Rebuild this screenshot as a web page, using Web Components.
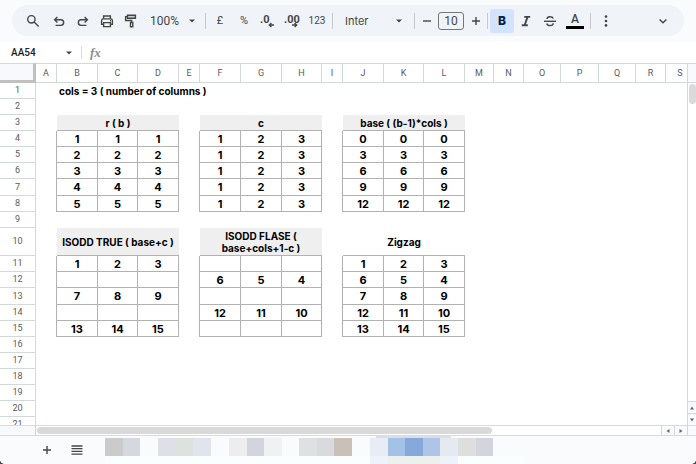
<!DOCTYPE html>
<html lang="en">
<head>
<meta charset="utf-8">
<title>Zigzag sheet</title>
<style>
  html, body { margin: 0; height: 100%; background: #4a4a4a; }
  body { font-family: Roboto, "Liberation Sans", sans-serif; color: #444746; overflow: hidden; }
</style>
</head>
<body>
<sheet-app>
  <tool-bar slot="tools"></tool-bar>
  <name-bar slot="name" cell="AA54"></name-bar>
  <scroll-frame slot="grid"><sheet-grid></sheet-grid></scroll-frame>
  <tab-strip slot="tabs"></tab-strip>
</sheet-app>

<script>
const define = (name, html, setup) => {
  const template = document.createElement('template');
  template.innerHTML = html;
  customElements.define(name, class extends HTMLElement {
    constructor() {
      super();
      this.attachShadow({ mode: 'open' }).append(template.content.cloneNode(true));
    }
    connectedCallback() { if (setup) setup(this, this.shadowRoot); }
  });
};

const ICONS = {
  search: '<circle cx="6.4" cy="6.3" r="3.7"/><path d="M9.2 9.1l4.4 4.4"/>',
  undo: '<path d="M4.6 12.4h5.2a2.8 2.8 0 0 0 0-5.7H4"/><path d="M6.4 3.9L3.6 6.7l2.8 2.8"/>',
  redo: '<path d="M11.4 12.4H6.2a2.8 2.8 0 0 1 0-5.7H12"/><path d="M9.6 3.9l2.8 2.8-2.8 2.8"/>',
  print: '<path d="M4.6 5.8V3h6.8v2.8M4.4 11.4H2.6V7.6q0-1.7 1.7-1.7h7.4q1.7 0 1.7 1.7v3.8h-1.8"/><path d="M4.6 9.6h6.8v4H4.6z"/><path d="M11 7.8h1"/>',
  paint: '<path d="M4.4 2.2h8v3h-8z" fill="#c9ccd0"/><path d="M4.2 3.6H2.6v3.9h6v2"/><path d="M7.5 9.5h2.3v4.3H7.5z"/>',
  decless: '<path d="M14 12H9.3M11.4 9.9L9.3 12l2.1 2.1"/>',
  decmore: '<path d="M8 12h4.7M10.6 9.9l2.1 2.1-2.1 2.1"/>',
  minus: '<path d="M4 8h8"/>',
  plus: '<path d="M4 8h8M8 4v8"/>',
  italic: '<path d="M6.2 3.9h6M3.8 12.2h6M9.6 3.9L6.6 12.2" stroke-width="1.9"/>',
  strike: '<path d="M2 8.3h12"/><path d="M11.2 5.6C10.8 4.2 9.6 3.7 8.1 3.7 6.3 3.7 5 4.5 5 5.9M4.8 10.5C5.2 12 6.4 12.6 8 12.6c1.9 0 3.2-.9 3.2-2.3"/>',
  more: '<g fill="currentColor" stroke="none"><circle cx="8" cy="3.6" r="1.3"/><circle cx="8" cy="8" r="1.3"/><circle cx="8" cy="12.4" r="1.3"/></g>',
  chevron: '<path d="M4.6 6.4L8 9.8l3.4-3.4"/>',
  caret: '<path d="M5 6.5h6L8 9.5z" fill="currentColor" stroke="none"/>',
  menu: '<path d="M2.5 4h11M2.5 6.7h11M2.5 9.4h11M2.5 12.1h11" stroke-width="1.3"/>',
  up: '<path d="M6 9.5h4L8 6.5z" fill="currentColor" stroke="none"/>',
  down: '<path d="M6 6.5h4L8 9.5z" fill="currentColor" stroke="none"/>',
  left: '<path d="M9.5 6v4L6.5 8z" fill="currentColor" stroke="none"/>',
  right: '<path d="M6.5 6v4L9.5 8z" fill="currentColor" stroke="none"/>'
};

define('ui-icon', `
  <style>
    :host { display: block; width: 16px; height: 16px; }
    svg { display: block; }
  </style>
  <svg width="16" height="16" viewBox="0 0 16 16" fill="none" stroke="currentColor" stroke-width="1.4" aria-hidden="true"></svg>`,
  (host, root) => { root.querySelector('svg').innerHTML = ICONS[host.getAttribute('name')]; });

define('sheet-app', `
  <style>
    :host { display: flex; flex-direction: column; height: 100vh; overflow: hidden;
            background: #f9fbfd; border-radius: 0 0 5px 5px; }
    slot[name=grid]::slotted(*) { flex: 1; min-height: 0; }
  </style>
  <slot name="tools"></slot><slot name="name"></slot><slot name="grid"></slot><slot name="tabs"></slot>`);

define('tool-bar', `
  <style>
    :host { display: block; padding: 5px 12px 6px; background: #f9fbfd; }
    .pill { display: flex; align-items: center; height: 31px; padding: 0 9px 0 7px;
            border-radius: 16px; background: #f0f3f8; }
    button { display: grid; place-items: center; flex: none; width: 24px; height: 24px; padding: 0;
             border: 0; border-radius: 3px; background: none; color: #444746; font: 11px Roboto, sans-serif; }
    button > * { grid-area: 1 / 1; }
    .first { width: 28px; }
    .wide { width: 26px; }
    .step { width: 19px; }
    .num { font-size: 10px; }
    .dec { align-content: center; justify-items: start; padding-left: 4px; }
    .dec b { align-self: start; font: 700 11px/14px Roboto, sans-serif; }
    .bold { background: #d3e3fd; color: #041e49; font: 800 12px Inter, sans-serif; }
    .colour span { box-sizing: border-box; width: 18px; height: 16px; border-bottom: 3px solid #000;
                   font: 500 12px/13px Roboto, sans-serif; }
    .pick { display: grid; align-items: center; flex: none; width: 60px; }
    .font { width: 77px; }
    .pick > * { grid-area: 1 / 1; }
    .pick ui-icon { justify-self: end; margin-right: 3px; pointer-events: none; }
    .font ui-icon { margin-right: 5px; }
    select { appearance: none; width: 100%; height: 24px; padding: 0 0 0 7px; border: 0; outline: 0;
             background: none; font: 12px Roboto, sans-serif; color: #444746; }
    .font select { padding-left: 10px; font: 11px Inter, sans-serif; }
    input { box-sizing: border-box; flex: none; width: 26px; height: 18px; margin: 0 2px; padding: 0;
            border: 1px solid #747775; border-radius: 3px; background: none; text-align: center;
            font: 12px Roboto, sans-serif; color: #444746; }
    i { flex: none; width: 1px; height: 16px; margin: 0 2px; background: #c7cacd; }
    .space { flex: 1; }
  </style>
  <div class="pill">
    <button class="first" aria-label="Search"><ui-icon name="search"></ui-icon></button>
    <button aria-label="Undo"><ui-icon name="undo"></ui-icon></button>
    <button aria-label="Redo"><ui-icon name="redo"></ui-icon></button>
    <button aria-label="Print"><ui-icon name="print"></ui-icon></button>
    <button aria-label="Paint format"><ui-icon name="paint"></ui-icon></button>
    <label class="pick"><select aria-label="Zoom"><option>100%</option></select><ui-icon name="caret"></ui-icon></label>
    <i></i>
    <button aria-label="Currency">£</button>
    <button aria-label="Percent">%</button>
    <button class="dec" aria-label="Fewer decimals"><b>.0</b><ui-icon name="decless"></ui-icon></button>
    <button class="dec" aria-label="More decimals"><b>.00</b><ui-icon name="decmore"></ui-icon></button>
    <button class="wide num" aria-label="Number format">123</button>
    <i></i>
    <label class="pick font"><select aria-label="Font"><option>Inter</option></select><ui-icon name="caret"></ui-icon></label>
    <i></i>
    <button class="step" aria-label="Smaller"><ui-icon name="minus"></ui-icon></button>
    <input aria-label="Font size" value="10">
    <button class="step" aria-label="Larger"><ui-icon name="plus"></ui-icon></button>
    <i></i>
    <button class="bold" aria-label="Bold">B</button>
    <button aria-label="Italic"><ui-icon name="italic"></ui-icon></button>
    <button aria-label="Strikethrough"><ui-icon name="strike"></ui-icon></button>
    <button class="wide colour" aria-label="Text colour"><span>A</span></button>
    <i></i>
    <button class="wide" aria-label="More"><ui-icon name="more"></ui-icon></button>
    <span class="space"></span>
    <button aria-label="Hide menus"><ui-icon name="chevron"></ui-icon></button>
  </div>`);

define('name-bar', `
  <style>
    :host { display: flex; align-items: center; height: 21px; background: #fff; }
    input { width: 50px; height: 18px; padding: 0 0 0 11px; border: 0; outline: 0; background: none;
            font: 500 10px Roboto, sans-serif; color: #202124; }
    button { display: block; padding: 0; border: 0; background: none; color: #444746; }
    i { width: 1px; height: 13px; margin: 0 8px 0 4px; background: #dadce0; }
    em { font: italic 700 13px/18px "Liberation Serif", serif; color: #8a8e92; }
  </style>
  <input aria-label="Name box"><button aria-label="Named ranges"><ui-icon name="caret"></ui-icon></button>
  <i></i><em>fx</em>`,
  (host, root) => { root.querySelector('input').value = host.getAttribute('cell'); });

define('scroll-frame', `
  <style>
    :host { display: grid; grid-template: minmax(0, 1fr) 11px / minmax(0, 1fr) 9px; overflow: hidden; background: #fff; }
    .view { overflow: hidden; }
    .v { display: flex; flex-direction: column; box-sizing: border-box; border-left: 1px solid #d5d8d8; }
    .top { height: 18px; border: solid #d5d8d8; border-width: 1px 0; background: #f8f9fd; }
    .v .thumb { width: 7px; height: 20px; margin: 1px 0 0 1px; border-radius: 4px; background: #dadada; }
    .space { flex: 1; }
    .h { grid-column: 1 / 3; display: flex; box-sizing: border-box; border: solid #d8dadb; border-width: 1px 0; }
    .h .corner { width: 35px; border-right: 1px solid #d0d3d3; background: #f8f9fd; }
    .h .track { flex: 1; padding: 1px; }
    .h .thumb { width: 73%; height: 7px; border-radius: 4px; background: #d9d9d9; }
    button { display: grid; place-content: center; box-sizing: border-box; overflow: hidden; padding: 0;
             border: 0 solid #d5d8d8; background: #f9fafd; color: #666; }
    .v button { width: 8px; height: 12px; border-top-width: 1px; }
    .h button { width: 13px; height: 9px; border-left-width: 1px; }
    .h .end { width: 8px; border-left: 1px solid #d5d8d8; background: #f8f9fd; }
  </style>
  <div class="view"><slot></slot></div>
  <div class="v"><div class="top"></div><div class="thumb"></div><div class="space"></div>
    <button aria-label="Scroll up"><ui-icon name="up"></ui-icon></button>
    <button aria-label="Scroll down"><ui-icon name="down"></ui-icon></button></div>
  <div class="h"><div class="corner"></div><div class="track"><div class="thumb"></div></div>
    <button aria-label="Scroll left"><ui-icon name="left"></ui-icon></button>
    <button aria-label="Scroll right"><ui-icon name="right"></ui-icon></button><div class="end"></div></div>`);

const COLUMNS = { A: 21, B: 41, C: 40, D: 41, E: 21, F: 41, G: 41, H: 40, I: 21, J: 41, K: 40, L: 41,
                  M: 29, N: 30, O: 37, P: 38, Q: 37, R: 30, S: 29 };
const HEIGHTS = { 7: 17, 10: 28, 13: 17 };
const BLOCKS = [
  { col: 1, row: 3, title: 'r ( b )', fill: true, data: ['1 1 1', '2 2 2', '3 3 3', '4 4 4', '5 5 5'] },
  { col: 5, row: 3, title: 'c', fill: true, data: ['1 2 3', '1 2 3', '1 2 3', '1 2 3', '1 2 3'] },
  { col: 9, row: 3, title: 'base ( (b-1)*cols )', fill: true, data: ['0 0 0', '3 3 3', '6 6 6', '9 9 9', '12 12 12'] },
  { col: 1, row: 10, title: 'ISODD TRUE ( base+c )', fill: true, data: ['1 2 3', '', '7 8 9', '', '13 14 15'] },
  { col: 5, row: 10, title: 'ISODD FLASE (<br>base+cols+1-c )', fill: true, data: ['', '6 5 4', '', '12 11 10', ''] },
  { col: 9, row: 10, title: 'Zigzag', fill: false, data: ['1 2 3', '6 5 4', '7 8 9', '12 11 10', '13 14 15'] }
];

define('sheet-grid', `
  <style>
    :host { display: block; }
    table { table-layout: fixed; border-collapse: separate; border-spacing: 0; width: 0; }
    th, td { box-sizing: border-box; padding: 0; overflow: visible; white-space: nowrap; text-align: center; }
    th { border: solid #d5d8d8; border-width: 0 1px 1px 0; font: 9px/11px Roboto, sans-serif; color: #575b5f; }
    thead th { height: 20px; border-top-width: 1px; }
    thead td { border: solid #c0c0c0; border-width: 1px 3px 3px 0; border-top-color: #d5d8d8; background: #f8f9fd; }
    td { font: 700 10px/12px Inter, sans-serif; color: #000; }
    td.note { text-align: left; padding-left: 2px; }
    td.cell { border: solid #b2b2b2; border-width: 0 1px 1px 0; font-size: 11px; }
    td.edge { border-right: 1px solid #b2b2b2; }
    td.title { border-bottom: 1px solid #b2b2b2; }
    td.fill { background: #efefef; }
  </style>
  <table><colgroup></colgroup><thead></thead><tbody></tbody></table>`,
  (host, root) => {
    const names = Object.keys(COLUMNS);
    root.querySelector('colgroup').innerHTML =
      '<col style="width:36px">' + names.map(n => `<col style="width:${COLUMNS[n]}px">`).join('');
    root.querySelector('thead').innerHTML =
      '<tr><td></td>' + names.map(n => `<th scope="col">${n}</th>`).join('') + '</tr>';
    let html = '';
    for (let r = 1; r <= 21; r++) {
      html += `<tr style="height:${HEIGHTS[r] || 16}px"><th scope="row">${r}</th>`;
      for (let c = 0; c < names.length; c++) {
        const head = BLOCKS.find(b => b.row === r && b.col === c);
        const body = BLOCKS.find(b => r > b.row && r <= b.row + 5 && c >= b.col && c < b.col + 3);
        const next = BLOCKS.find(b => r > b.row && r <= b.row + 5 && c === b.col - 1);
        if (head) {
          html += `<td colspan="3" class="title${head.fill ? ' fill' : ''}">${head.title}</td>`;
          c += 2;
        } else if (body) {
          html += `<td class="cell">${body.data[r - body.row - 1].split(' ')[c - body.col] || ''}</td>`;
        } else if (r === 1 && c === 1) {
          html += '<td class="note" colspan="4">cols = 3 ( number of columns )</td>';
          c += 3;
        } else {
          html += `<td${next ? ' class="edge"' : ''}></td>`;
        }
      }
      html += '</tr>';
    }
    root.querySelector('tbody').innerHTML = html;
  });

const MOSAIC = [
  [0, '#cbcbcb', '#d5d9df'],
  [53, '#dfe0e7', '#dde2de', '#dfe4ed'],
  [124, '#ededed', '#d2d5de', '#eff1f3'],
  [194, '#dde1e2', '#d9dadf', '#c9c0b7'],
  [265, '#e7ecf5', '#a2c3e5', '#85a9db', '#aec5e7', '#e5eaf0', '#dedede', '#d2d5de']
];

define('tab-strip', `
  <style>
    :host { display: flex; align-items: center; height: 28px; background: #f9fbfd; padding-left: 35px; }
    button { display: grid; place-items: center; width: 24px; height: 24px; padding: 0; border: 0;
             background: none; color: #444746; }
    .list { margin: 0 16px 0 6px; }
    svg { display: block; }
  </style>
  <button aria-label="Add sheet"><ui-icon name="plus"></ui-icon></button>
  <button class="list" aria-label="All sheets"><ui-icon name="menu"></ui-icon></button>
  <svg width="420" height="28" viewBox="0 0 420 28" shape-rendering="crispEdges" role="img" aria-label="Sheet tabs"></svg>`,
  (host, root) => {
    let s = '<path fill="#fbfefe" d="M0 20h419v8H0z"/><path fill="#eef2fa" d="M265 20h88v8h-88z"/>' +
            '<path fill="#edf1ee" d="M282 20h53v8h-53z"/><path fill="#dcdee6" d="M271 0h75v2h-75z"/>';
    for (const [x, ...colours] of MOSAIC)
      colours.forEach((f, i) => {
        const a = Math.round(x + i * 17.6), b = Math.round(x + (i + 1) * 17.6);
        s += `<rect x="${a}" y="2" width="${b - a}" height="18" fill="${f}"/>`;
      });
    root.querySelector('svg').innerHTML = s;
  });
</script>
</body>
</html>
